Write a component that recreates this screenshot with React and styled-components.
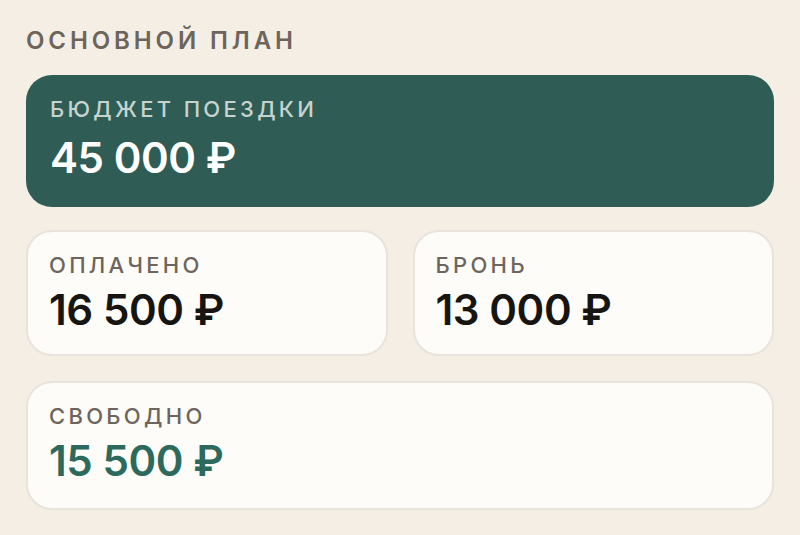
import React from 'react';
import styled, { createGlobalStyle } from 'styled-components';

const GlobalStyle = createGlobalStyle`
  html, body {
    margin: 0;
    background: #f4eee4;
  }
  body {
    font-family: Inter, "Noto Sans", "Liberation Sans", sans-serif;
  }
`;

const Page = styled.main`
  width: 800px;
  height: 535px;
  box-sizing: border-box;
  padding: 26px 26px 0;
  display: flex;
  flex-direction: column;
`;

const Heading = styled.h2`
  margin: 0 0 19px;
  font-size: 24px;
  line-height: 30px;
  font-weight: 600;
  letter-spacing: 3.9px;
  color: #6d655c;
`;

const Grid = styled.div`
  display: grid;
  grid-template-columns: 1fr 1fr;
  column-gap: 25px;
  row-gap: 23px;
`;

const Card = styled.section`
  grid-column: ${p => (p.wide ? '1 / -1' : 'auto')};
  box-sizing: border-box;
  height: ${p => p.height}px;
  margin-top: ${p => (p.wide && !p.accent ? 2 : 0)}px;
  padding: ${p => (p.accent ? '20px 24px 0' : '19px 21px 0')};
  border-radius: 26px;
  background: ${p => (p.accent ? '#2f5d55' : '#fdfcf8')};
  border: ${p => (p.accent ? 'none' : '2px solid #e8e3dc')};
  display: flex;
  flex-direction: column;
  gap: ${p => (p.accent ? 10 : 6)}px;
`;

const Label = styled.div`
  font-size: 22px;
  line-height: 28px;
  font-weight: 500;
  letter-spacing: 3.3px;
  color: ${p => (p.accent ? '#c6d3cf' : '#6d655c')};
`;

const Value = styled.div`
  font-size: 42px;
  line-height: 50px;
  font-weight: 600;
  letter-spacing: -0.01em;
  color: ${p => p.color};
`;

const cards = [
  { id: 'paid', label: 'ОПЛАЧЕНО', value: '16 500 ₽', color: '#171512', height: 126 },
  { id: 'booking', label: 'БРОНЬ', value: '13 000 ₽', color: '#171512', height: 126 },
  { id: 'free', label: 'СВОБОДНО', value: '15 500 ₽', color: '#2b6a5c', height: 129, wide: true }
];

export default function App() {
  return (
    <>
      <GlobalStyle />
      <Page>
        <Heading>ОСНОВНОЙ ПЛАН</Heading>
        <Grid>
          <Card accent wide height={132}>
            <Label accent>БЮДЖЕТ ПОЕЗДКИ</Label>
            <Value color="#ffffff">45 000 ₽</Value>
          </Card>
          {cards.map(card => (
            <Card key={card.id} wide={card.wide} height={card.height}>
              <Label>{card.label}</Label>
              <Value color={card.color}>{card.value}</Value>
            </Card>
          ))}
        </Grid>
      </Page>
    </>
  );
}
